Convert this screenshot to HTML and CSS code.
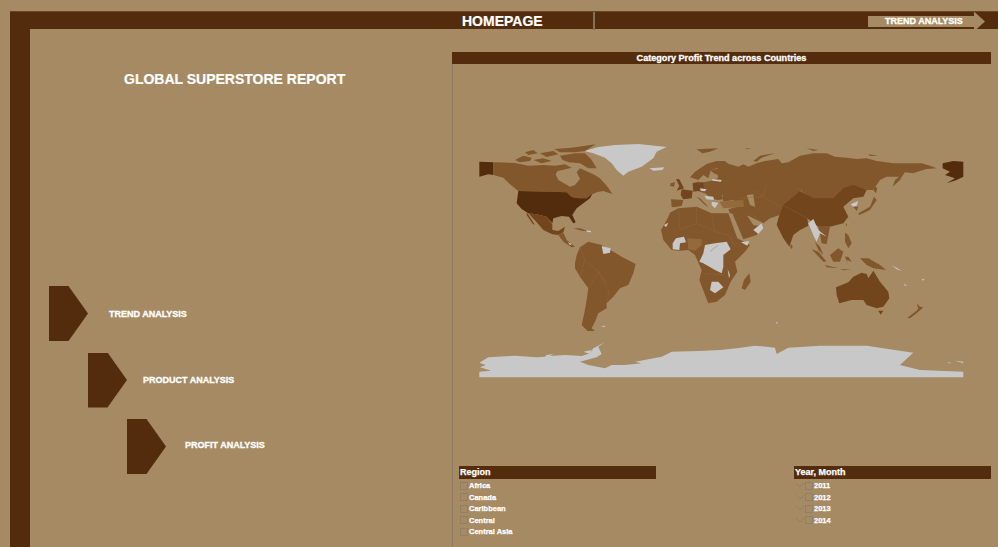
FILE: index.html
```html
<!DOCTYPE html>
<html lang="en">
<head>
    <meta charset="UTF-8">
    <meta name="viewport" content="width=device-width, initial-scale=1.0">
    <title>Global Superstore Report</title>
    <link rel="stylesheet" href="styles.css">
</head>
<body>

<div class="top-bar">
    <div class="top-title">HOMEPAGE</div>
    <div class="top-divider"></div>
    <div class="top-link">
        <span class="top-link-body">TREND ANALYSIS</span>
        <span class="top-link-head"></span>
    </div>
</div>

<div class="main">
    <div class="side-bar"></div>

    <div class="left-panel">
        <h1 class="report-title">GLOBAL SUPERSTORE REPORT</h1>
        <div class="nav-list">
            <div class="nav-row nav-trend"><span class="nav-arrow"></span><span class="nav-label">TREND ANALYSIS</span></div>
            <div class="nav-row nav-product"><span class="nav-arrow"></span><span class="nav-label">PRODUCT ANALYSIS</span></div>
            <div class="nav-row nav-profit"><span class="nav-arrow"></span><span class="nav-label">PROFIT ANALYSIS</span></div>
        </div>
    </div>

    <div class="right-panel">
        <div class="map-title">Category Profit Trend across Countries</div>
        <div class="map-body">
            <svg class="map" width="540" height="260" viewBox="452 130 540 260">
                <!-- north america, traced from 3x crop -->
                <g transform="translate(465 135) scale(.3333)">
                    <path class="none" d="M358 48 L400 36 L450 30 L520 27 L605 36 L575 50 L565 70 L530 95 L490 110 L475 122 L455 105 L440 85 L420 68 L385 55 Z"/>
                    <path class="none" d="M553 100 L598 97 L592 105 L565 107 Z"/>
                    <path class="mid" d="M695 43 L760 40 L735 50 L712 55 Z"/>
                    <path class="deep" d="M43 80 L85 82 L85 120 L70 118 L43 125 Z"/>
                    <path class="mid" d="M85 82 L150 84 L190 92 L235 90 L270 92 L300 88 L320 98 L295 104 L278 108 L272 118 L280 135 L315 155 L330 150 L345 132 L335 112 L345 100 L385 118 L405 130 L430 158 L442 177 L415 168 L395 172 L382 178 L365 190 L340 190 L320 186 L305 172 L160 168 L135 148 L115 128 L85 120 Z"/>
                    <path class="mid" d="M150 75 L175 62 L200 68 L195 78 L165 82 Z"/>
                    <path class="mid" d="M205 75 L235 70 L260 78 L230 85 Z"/>
                    <path class="mid" d="M180 52 L205 45 L218 55 L190 60 Z"/>
                    <path class="mid" d="M225 55 L265 48 L280 58 L245 66 Z"/>
                    <path class="mid" d="M268 42 L320 38 L392 28 L360 48 L330 52 L285 52 Z"/>
                    <path class="mid" d="M285 62 L330 55 L360 55 L378 72 L395 100 L370 100 L345 85 L310 82 L292 74 Z"/>
                    <path class="deep" d="M160 168 L305 172 L320 186 L340 190 L365 190 L382 176 L375 190 L355 205 L335 220 L322 240 L332 262 L325 265 L312 245 L290 243 L265 250 L262 265 L245 245 L215 238 L190 235 L170 222 L155 205 Z"/>
                    <path class="dark" d="M190 235 L215 238 L245 245 L262 268 L262 285 L280 288 L300 275 L295 292 L280 300 L262 298 L235 285 L215 262 L195 240 Z"/>
                    <path class="dark" d="M185 232 L210 270 L203 266 L185 240 Z"/>
                    <path class="mid" d="M280 300 L295 293 L305 315 L330 335 L320 337 L295 320 Z"/>
                    <path class="mid" d="M325 280 L345 280 L368 288 L350 287 Z"/>
                    <path class="none" d="M365 286 L378 288 L378 292 L366 291 Z"/>
                    <path class="none" d="M308 322 L320 327 L316 331 Z"/>
                </g>
                <!-- south america and west antarctica -->
                <g transform="translate(465 250) scale(.3333)">
                    <path class="mid" d="M330 40 L335 15 L345 -8 L370 -25 L410 -15 L445 5 L470 20 L512 42 L505 70 L490 105 L465 115 L445 140 L425 160 L425 175 L400 190 L390 215 L380 235 L390 243 L368 243 L350 225 L358 190 L365 150 L370 115 L345 80 L330 55 Z"/>
                    <path class="none" d="M410 -12 L437 -5 L435 8 L415 12 Z"/>
                    <path class="none" d="M408 228 L420 227 L418 232 Z"/>
                    <path class="line" d="M345 -8 L360 30 L345 80 M360 30 L400 65 L432 125 L425 160 M370 115 L400 65 M400 65 L425 100"/>
                    <path class="none" d="M43 338 L62 345 L45 352 L78 362 L43 365 L43 382 L1495 382 L1495 365 L1365 360 L1305 345 L1345 308 L1205 287 L1065 287 L970 293 L935 312 L930 293 L870 287 L815 295 L765 300 L700 303 L620 305 L590 320 L510 335 L530 340 L480 345 L440 345 L420 355 L370 345 L345 335 L395 322 L410 312 L400 290 L420 277 L385 295 L375 310 L350 318 L300 315 L255 318 L265 312 L245 315 L240 320 L215 322 L150 317 L70 322 Z"/>
                    <path class="none" d="M355 305 L380 300 L375 312 Z"/>
                    <path class="none" d="M1470 332 L1495 335 L1495 340 Z"/>
                    <path class="none" d="M1450 336 L1460 340 L1450 339 Z"/>
                </g>
                <!-- asia -->
                <g transform="translate(720 135) scale(.3333)">
                    <path class="mid" d="M-10 110 L0 80 L30 88 L55 95 L70 88 L85 95 L110 85 L135 78 L175 72 L185 85 L205 82 L240 62 L280 55 L320 55 L345 65 L380 68 L410 72 L440 70 L470 78 L520 85 L560 85 L605 85 L630 92 L650 100 L620 102 L600 108 L580 115 L555 112 L545 125 L520 125 L500 125 L480 135 L470 150 L458 165 L440 165 L400 155 L370 165 L300 160 L250 165 L200 155 L140 145 L100 170 L70 180 L50 175 L20 170 L0 145 Z"/>
                    <path class="mid" d="M-10 140 L50 170 L70 175 L100 165 L140 140 L200 150 L245 165 L195 212 L180 240 L150 250 L130 265 L100 250 L80 240 L60 225 L40 195 L10 200 L5 160 Z"/>
                    <path class="bg" d="M80 180 L100 178 L105 215 L90 210 Z"/>
                    <path class="mid" d="M240 165 L300 155 L350 160 L375 158 L340 195 L280 195 Z"/>
                    <path class="dark" d="M190 210 L240 168 L280 190 L340 190 L370 160 L400 150 L440 165 L430 185 L400 190 L370 215 L385 245 L370 265 L330 275 L295 275 L262 250 L215 225 Z"/>
                    <path class="dark" d="M190 210 L215 225 L262 250 L265 272 L240 285 L220 300 L208 335 L190 310 L170 270 L175 250 Z"/>
                    <path class="mid" d="M295 275 L330 275 L325 300 L320 328 L305 325 L300 295 Z"/>
                    <path class="none" d="M265 265 L280 252 L295 285 L320 305 L300 295 L290 320 L282 305 Z"/>
                    <path class="none" d="M392 208 L415 198 L410 212 L400 215 Z"/>
                    <path class="mid" d="M400 215 L415 215 L410 228 Z"/>
                    <path class="mid" d="M415 235 L450 215 L462 185 L470 195 L450 225 L418 240 Z"/>
                    <path class="mid" d="M460 150 L472 160 L468 175 L460 165 Z"/>
                    <path class="mid" d="M518 155 L525 135 L552 113 L540 135 Z"/>
                    <path class="mid" d="M100 78 L120 62 L165 55 L125 68 L110 80 Z"/>
                    <path class="mid" d="M260 40 L295 45 L280 48 Z"/>
                    <path class="mid" d="M445 58 L475 62 L450 63 Z"/>
                    <path class="mid" d="M75 40 L95 41 L80 43 Z"/>
                    <path class="deep" d="M668 85 L700 78 L730 80 L730 125 L710 135 L680 145 L705 130 L675 120 L690 110 L668 100 Z"/>
                    <path class="mid" d="M212 328 L218 332 L216 342 L211 338 Z"/>
                    <path class="line" d="M0 140 L20 165 M140 140 L130 185 L60 190 M130 185 L180 215 M40 195 L130 265 M100 165 L130 185"/>
                </g>
                <!-- europe -->
                <g transform="translate(640 150) scale(.3333)">
                    <path class="mid" d="M150 82 L165 65 L200 42 L230 33 L255 33 L268 45 L255 55 L228 55 L212 62 L205 85 L190 75 L175 90 Z"/>
                    <path class="mid" d="M212 62 L228 56 L250 58 L262 62 L250 78 L225 72 Z"/>
                    <path class="mid" d="M158 100 L172 95 L190 97 L215 92 L232 85 L240 75 L250 35 L300 60 L300 120 L335 125 L320 135 L280 125 L245 135 L250 148 L235 150 L218 148 L195 130 L180 125 L165 120 Z"/>
                    <path class="mid" d="M265 178 L310 165 L335 195 L320 197 L270 190 Z"/>
                    <path class="dark" d="M125 118 L158 122 L155 145 L130 148 L122 135 Z"/>
                    <path class="dark" d="M158 100 L190 98 L192 120 L160 125 Z"/>
                    <path class="dark" d="M108 87 L118 88 L132 115 L110 122 L118 108 Z"/>
                    <path class="mid" d="M92 100 L105 97 L102 110 L90 108 Z"/>
                    <path class="mid" d="M93 148 L130 150 L125 168 L100 172 L95 170 Z"/>
                    <path class="mid" d="M170 140 L180 145 L205 170 L195 165 Z"/>
                    <path class="soft" d="M238 155 L310 150 L312 170 L250 175 Z"/>
                    <path class="none" d="M180 115 L200 118 L195 124 L182 122 Z"/>
                    <path class="none" d="M193 137 L220 140 L222 150 L200 148 Z"/>
                    <path class="none" d="M215 155 L235 158 L225 175 L215 165 Z"/>
                    <path class="none" d="M215 87 L245 90 L243 95 L218 92 Z"/>
                </g>
                <!-- africa and arabia -->
                <g transform="translate(660 210) scale(.3333)">
                    <path class="mid" d="M30 8 L55 -5 L110 -10 L155 10 L205 10 L232 85 L270 105 L255 125 L225 155 L232 185 L212 215 L195 255 L170 275 L145 280 L135 255 L118 210 L125 180 L105 135 L85 120 L60 122 L35 120 L10 90 L3 60 L15 40 L25 20 Z"/>
                    <path class="mid" d="M215 5 L260 15 L280 45 L310 50 L290 75 L250 88 Z"/>
                    <path class="soft" d="M82 85 L125 88 L125 105 L105 122 L85 118 Z"/>
                    <path class="none" d="M135 105 L165 100 L200 95 L212 118 L190 135 L190 170 L185 190 L165 180 L130 160 L118 155 L130 130 Z"/>
                    <path class="none" d="M48 85 L72 80 L78 97 L60 100 L58 120 L38 118 L38 100 Z"/>
                    <path class="none" d="M155 215 L175 215 L190 232 L165 250 L150 240 Z"/>
                    <path class="none" d="M12 45 L25 38 L18 52 Z"/>
                    <path class="none" d="M243 97 L268 93 L262 107 Z"/>
                    <path class="none" d="M203 178 L210 195 L207 205 Z"/>
                    <path class="none" d="M280 60 L305 40 L310 55 L295 72 Z"/>
                    <path class="mid" d="M268 190 L272 215 L255 240 L245 235 L252 210 Z"/>
                    <path class="line" d="M55 -5 L60 60 L110 40 L165 65 L155 10 M165 65 L205 75 L225 110 M110 40 L110 -10 M135 190 L190 195 M175 105 L150 125"/>
                </g>
                <!-- south east asia -->
                <g transform="translate(780 210) scale(.3333)">
                    <path class="mid" d="M95 118 L115 125 L140 155 L130 155 Z"/>
                    <path class="mid" d="M105 95 L120 110 L130 135 L115 120 Z"/>
                    <path class="mid" d="M150 135 L175 115 L190 125 L180 155 L160 155 Z"/>
                    <path class="mid" d="M195 140 L205 140 L215 155 L200 150 L205 165 Z"/>
                    <path class="mid" d="M240 145 L265 145 L300 165 L318 180 L280 175 L260 165 Z"/>
                    <path class="mid" d="M135 165 L175 175 L140 172 Z"/>
                    <path class="mid" d="M180 178 L215 178 L190 181 Z"/>
                    <path class="mid" d="M195 68 L205 75 L215 100 L205 115 L195 95 Z"/>
                    <path class="mid" d="M197 40 L201 42 L199 50 Z"/>
                    <path class="none" d="M335 165 L365 182 L350 178 Z"/>
                </g>
                <!-- australia and the islands below it -->
                <g transform="translate(720 250) scale(.3333)">
                    <path class="dark" d="M348 112 L385 97 L400 80 L425 68 L440 72 L445 85 L460 62 L480 95 L505 125 L508 145 L490 170 L470 175 L440 165 L430 150 L395 150 L358 160 L350 135 Z"/>
                    <path class="dark" d="M475 182 L490 182 L482 194 Z"/>
                    <path class="mid" d="M590 160 L600 170 L610 172 L590 190 L570 205 L562 203 L590 182 L595 175 Z"/>
                    <path class="none" d="M550 100 L562 108 L555 107 Z"/>
                    <path class="none" d="M605 88 L615 86 L608 92 Z"/>
                    <path class="none" d="M167 217 L173 217 L171 222 Z"/>
                </g>
            </svg>

            <div class="filters">
                <div class="filter">
                    <div class="filter-title">Region</div>
                    <div class="filter-row"><span class="check"></span>Africa</div>
                    <div class="filter-row"><span class="check"></span>Canada</div>
                    <div class="filter-row"><span class="check"></span>Caribbean</div>
                    <div class="filter-row"><span class="check"></span>Central</div>
                    <div class="filter-row"><span class="check"></span>Central Asia</div>
                </div>
                <div class="filter">
                    <div class="filter-title">Year, Month</div>
                    <div class="filter-row"><svg class="chevron" width="8" height="5" viewBox="0 0 8 5"><path d="M0 0 L4 4 L8 0"/></svg><span class="check"></span>2011</div>
                    <div class="filter-row"><svg class="chevron" width="8" height="5" viewBox="0 0 8 5"><path d="M0 0 L4 4 L8 0"/></svg><span class="check"></span>2012</div>
                    <div class="filter-row"><svg class="chevron" width="8" height="5" viewBox="0 0 8 5"><path d="M0 0 L4 4 L8 0"/></svg><span class="check"></span>2013</div>
                    <div class="filter-row"><svg class="chevron" width="8" height="5" viewBox="0 0 8 5"><path d="M0 0 L4 4 L8 0"/></svg><span class="check"></span>2014</div>
                </div>
            </div>
        </div>
    </div>
</div>

</body>
</html>
```

FILE: styles.css
```css
* {
    box-sizing: border-box;
}
html, body {
    height: 547px;
    overflow: hidden;
}
body {
    font-family: 'Liberation Sans', Arial, sans-serif;
    background: #a58a63;
    color: #fff;
    margin: 0;
    padding: 11px 0 0 10px;
}
.top-bar {
    display: flex;
    align-items: center;
    height: 18px;
    background: #532c0e;
    border-top: 1px solid #684526;
}
.top-title {
    margin-left: 452px;
    width: 131px;
    font-size: 14px;
    font-weight: bold;
    -webkit-text-stroke: 0.2px #fff;
}
.top-divider {
    width: 2px;
    height: 18px;
    background: #85705a;
}
.top-link {
    display: flex;
    align-items: center;
    margin-left: 273px;
    height: 20px;
    margin-top: 2px;
}
.top-link-body {
    width: 106px;
    height: 11px;
    line-height: 11px;
    padding-left: 17px;
    background: #a58a63;
    font-size: 9px;
    font-weight: bold;
    white-space: nowrap;
    -webkit-text-stroke: 0.3px #fff;
}
.top-link-head {
    width: 11px;
    height: 20px;
    background: #a58a63;
    clip-path: polygon(0 0, 100% 50%, 0 100%);
}
.main {
    display: flex;
    height: 518px;
}
.side-bar {
    width: 20px;
    background: #532c0e;
}
.left-panel {
    width: 422px;
}
.report-title {
    margin: 43px 0 0 94px;
    font-size: 14px;
    line-height: 14px;
    font-weight: bold;
    -webkit-text-stroke: 0.2px #fff;
}
.nav-list {
    display: flex;
    flex-direction: column;
    gap: 11.5px;
    margin-top: 200px;
}
.nav-row {
    display: flex;
    align-items: center;
    height: 55px;
}
.nav-arrow {
    width: 39px;
    height: 55px;
    background: #532c0e;
    clip-path: polygon(0 0, 50% 0, 100% 50%, 50% 100%, 0 100%);
}
.nav-label {
    font-size: 9px;
    font-weight: bold;
    white-space: nowrap;
    -webkit-text-stroke: 0.3px #fff;
}
.nav-trend {
    padding-left: 19px;
}
.nav-trend .nav-label {
    margin-left: 21px;
}
.nav-product {
    padding-left: 58px;
}
.nav-product .nav-label {
    margin-left: 16px;
}
.nav-profit {
    padding-left: 97px;
}
.nav-profit .nav-label {
    margin-left: 19px;
    margin-bottom: 3px;
}
.right-panel {
    width: 539px;
    margin-top: 23px;
}
.map-title {
    height: 12px;
    line-height: 12px;
    background: #532c0e;
    text-align: center;
    font-size: 9.1px;
    font-weight: bold;
    -webkit-text-stroke: 0.3px #fff;
}
.map-body {
    height: 483px;
    padding-top: 66px;
    border-left: 1px solid #8c7a60;
}
.map {
    display: block;
    margin-left: -1px;
}
.map .bg { fill: #a58a63; }
.map .deep { fill: #532c0e; }
.map .dark { fill: #72451c; }
.map .mid { fill: #83572c; }
.map .soft { fill: #946a3c; }
.map .none { fill: #c8c8c8; }
.map .line {
    fill: none;
    stroke: #946a3c;
    stroke-width: 1.2;
}
.filters {
    display: flex;
    justify-content: space-between;
    margin-top: 76px;
    padding-left: 6px;
}
.filter {
    width: 197px;
}
.filter-title {
    height: 13px;
    line-height: 13px;
    margin-bottom: 1px;
    background: #532c0e;
    padding-left: 1px;
    font-size: 9px;
    font-weight: bold;
    -webkit-text-stroke: 0.25px #fff;
}
.filter-row {
    display: flex;
    align-items: center;
    height: 11.5px;
    font-size: 7.5px;
    font-weight: bold;
    -webkit-text-stroke: 0.25px #fff;
}
.check {
    width: 8px;
    height: 8px;
    margin: 0 1px 0 1px;
    border: 1px solid #8f8068;
}
.chevron {
    margin-left: 2px;
    fill: none;
    stroke: #8f8068;
    stroke-width: 1;
}
```
